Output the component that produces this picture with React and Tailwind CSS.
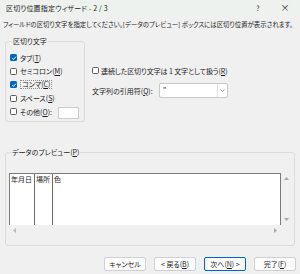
import React from 'react';

const font = { fontFamily: '"Noto Sans CJK JP", "Noto Sans", sans-serif' };

const Check = ({ checked }) =>
  checked ? (
    <span className="w-[7px] h-[7px] rounded-[1.5px] bg-[#0067c0] flex items-center justify-center shrink-0">
      <svg width="6" height="6" viewBox="0 0 10 10">
        <path d="M2 5.2 L4.2 7.4 L8.2 2.8" fill="none" stroke="#fff" strokeWidth="1.6" />
      </svg>
    </span>
  ) : (
    <span className="w-[7px] h-[7px] rounded-[1.5px] border border-[#5a5a5a] bg-[#fbfbfb] shrink-0" />
  );

const Row = ({ checked, children }) => (
  <div className="h-[13.5px] flex items-center">
    <Check checked={checked} />
    <span className="ml-[3px] flex items-center">{children}</span>
  </div>
);

const Btn = ({ children, focus }) => (
  <div
    className={
      'w-[42px] h-[14px] rounded-[2px] bg-[#fdfdfd] flex items-center justify-center ' +
      (focus ? 'border border-[#0067c0]' : 'border border-[#d0d0d0]')
    }
  >
    {children}
  </div>
);

export default function App() {
  return (
    <div
      className="w-[300px] h-[274px] bg-[#f0f0f0] flex flex-col overflow-hidden text-[7px] leading-[8px] text-[#1b1b1b] [font-feature-settings:'palt']"
      style={font}
    >
      {/* title bar */}
      <div className="h-[15px] bg-[#eef2ef] flex items-center pl-[6px] pr-[8px]">
        <span className="tracking-[0.2px]">区切り位置指定ウィザード - 2 / 3</span>
        <span className="ml-auto w-[14px] text-center text-[7px]">?</span>
        <span className="ml-[13px] w-[14px] text-center text-[9px]">×</span>
      </div>

      <div className="mt-[6px] pl-[3px] whitespace-nowrap text-[6.4px]">
        フィールドの区切り文字を指定してください。[データのプレビュー] ボックスには区切り位置が表示されます。
      </div>

      {/* delimiters + options */}
      <div className="mt-[8px] flex">
        <fieldset className="ml-[5px] w-[80px] h-[85px] border border-[#dcdcdc] rounded-[3px] pl-[4px] pt-[6px]">
          <legend className="ml-[2px] px-[1px]">区切り文字</legend>
          <Row checked>
            タブ(<u>T</u>)
          </Row>
          <Row>
            セミコロン(<u>M</u>)
          </Row>
          <Row checked>
            <span className="border border-dotted border-[#8a8a8a] px-[1px] leading-[7px]">
              コンマ(<u>C</u>)
            </span>
          </Row>
          <Row>
            スペース(<u>S</u>)
          </Row>
          <div className="h-[13.5px] flex items-center">
            <Check />
            <span className="ml-[3px]">
              その他(<u>O</u>):
            </span>
            <div className="ml-[6px] mt-[2px] w-[21px] h-[12px] bg-white border border-[#cccccc]" />
          </div>
        </fieldset>

        <div className="ml-[7px] flex flex-col">
          <div className="mt-[27px] h-[13px] flex items-center">
            <Check />
            <span className="ml-[2px] tracking-[-0.1px]">
              連続した区切り文字は 1 文字として扱う(<u>R</u>)
            </span>
          </div>
          <div className="mt-[6px] h-[15px] flex items-center">
            <span className="w-[67px]">
              文字列の引用符(<u>Q</u>):
            </span>
            <div className="w-[69px] h-[15px] bg-white border border-[#c8c8c8] rounded-[2px] flex">
              <span className="pl-[3px] pt-[1px] flex-1">"</span>
              <div className="w-[10px] border-l border-[#e2e2e2] flex items-center justify-center">
                <svg width="5" height="3" viewBox="0 0 10 6">
                  <path d="M1 1 L5 5 L9 1" fill="none" stroke="#707070" strokeWidth="1.2" />
                </svg>
              </div>
            </div>
          </div>
        </div>
      </div>

      {/* preview */}
      <fieldset className="mt-[26px] ml-[5px] w-[290px] h-[98px] border border-[#dcdcdc] rounded-[3px] pl-[3px] pt-[17px]">
        <legend className="ml-[2px] px-[1px]">
          データのプレビュー(<u>P</u>)
        </legend>
        <div className="grid grid-cols-[272px_11px] grid-rows-[52px_10px]">
          <div className="bg-white border-t border-l border-r border-[#7a7a7a] flex">
            <div className="w-[25px] border-r border-[#6a6a6a] pl-[1px] pt-[1px]">年月日</div>
            <div className="w-[18px] border-r border-[#6a6a6a] pl-[1px] pt-[1px]">場所</div>
            <div className="pl-[1px] pt-[1px]">色</div>
          </div>
          <div className="flex flex-col items-center justify-between py-[4px]">
            <svg width="5" height="3" viewBox="0 0 10 6">
              <path d="M0 6 L5 0 L10 6 Z" fill="#a8a8a8" />
            </svg>
            <svg width="5" height="3" viewBox="0 0 10 6">
              <path d="M0 0 L5 6 L10 0 Z" fill="#a8a8a8" />
            </svg>
          </div>
          <div className="flex items-center justify-between px-[4px]">
            <svg width="3" height="5" viewBox="0 0 6 10">
              <path d="M6 0 L0 5 L6 10 Z" fill="#b8b8b8" />
            </svg>
            <svg width="3" height="5" viewBox="0 0 6 10">
              <path d="M0 0 L6 5 L0 10 Z" fill="#a8a8a8" />
            </svg>
          </div>
          <div />
        </div>
      </fieldset>

      {/* buttons */}
      <div className="mt-[11px] flex justify-end gap-[8px] pr-[4px]">
        <Btn>キャンセル</Btn>
        <Btn>
          &lt; 戻る(<u>B</u>)
        </Btn>
        <Btn focus>
          次へ(<u>N</u>) &gt;
        </Btn>
        <Btn>
          完了(<u>F</u>)
        </Btn>
      </div>
    </div>
  );
}
